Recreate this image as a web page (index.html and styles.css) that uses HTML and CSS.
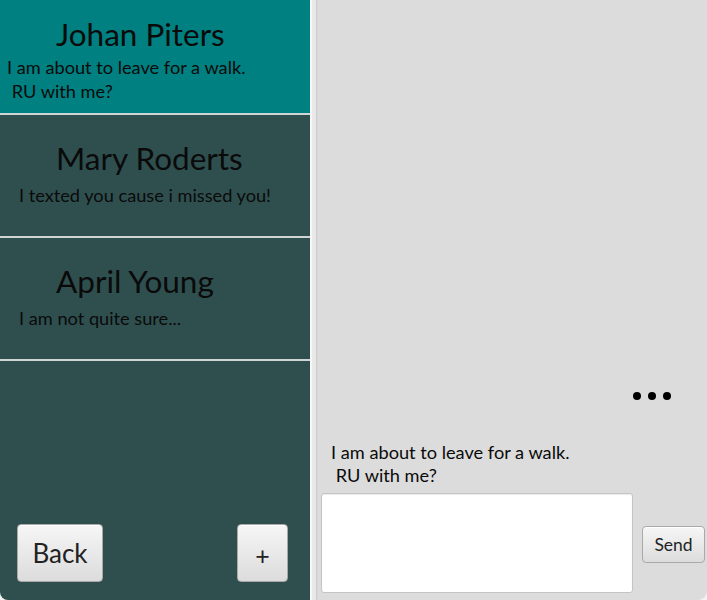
FILE: index.html
```html
<!DOCTYPE html>
<html>
<head>
<meta charset="utf-8">
<link rel="stylesheet" href="styles.css">
</head>
<body>
<div class="app">
  <aside class="sidebar">
    <div class="contact contact-first">
      <div class="name">Johan Piters</div>
      <div class="msg msg-first">I am about to leave for a walk.
 RU with me?</div>
    </div>
    <div class="contact">
      <div class="name">Mary Roderts</div>
      <div class="msg">I texted you cause i missed you!</div>
    </div>
    <div class="contact">
      <div class="name">April Young</div>
      <div class="msg">I am not quite sure...</div>
    </div>
    <div class="spacer"></div>
    <div class="actions">
      <button class="btn btn-back">Back</button>
      <button class="btn btn-add">+</button>
    </div>
  </aside>
  <div class="divider"></div>
  <main class="chat">
    <div class="typing"><span class="dot"></span><span class="dot"></span><span class="dot"></span></div>
    <div class="last-msg">I am about to leave for a walk.
 RU with me?</div>
    <div class="composer">
      <textarea class="input"></textarea>
      <button class="btn btn-send">Send</button>
    </div>
  </main>
</div>
</body>
</html>
```
FILE: styles.css
```css
html, body {
  margin: 0;
  padding: 0;
}
body {
  width: 707px;
  height: 600px;
  overflow: hidden;
  background: #f2f2f2;
  font-family: Lato, "Open Sans", sans-serif;
  color: #111;
}
.app {
  display: flex;
  width: 707px;
  height: 600px;
}
.sidebar {
  width: 310px;
  flex: none;
  display: flex;
  flex-direction: column;
  background: #2f4f4f;
  border-bottom-left-radius: 8px;
}
.contact {
  height: 121px;
  box-sizing: content-box;
  border-bottom: 2px solid #cfd4d4;
  display: flex;
  flex-direction: column;
}
.contact-first {
  height: 113px;
  background: #008080;
}
.name {
  font-size: 31.5px;
  line-height: 36px;
  padding-left: 56px;
  margin-top: 25px;
  color: #0a0a0a;
}
.contact-first .name {
  margin-top: 16px;
}
.msg {
  font-size: 18.2px;
  line-height: 24px;
  padding-left: 19px;
  margin-top: 7px;
  white-space: pre;
  color: #0a0a0a;
}
.msg-first {
  padding-left: 7px;
  margin-top: 3px;
}
.spacer {
  flex: 1;
}
.actions {
  display: flex;
  justify-content: space-between;
  padding: 0 22px 18px 17px;
}
.btn {
  font-family: Lato, "Open Sans", sans-serif;
  color: #222;
  border: 1px solid #a9a9a9;
  border-radius: 4px;
  background: linear-gradient(#f6f6f6, #dcdcdc);
  box-shadow: inset 0 1px 0 #ffffff;
  padding: 0;
  margin: 0;
  box-sizing: border-box;
}
.btn-back {
  width: 86px;
  height: 58px;
  font-size: 26px;
}
.btn-add {
  width: 51px;
  height: 58px;
  font-size: 25px;
  padding-top: 3px;
}
.divider {
  width: 8px;
  flex: none;
  background: linear-gradient(to right, #f7f7f7 0, #f7f7f7 2px, #e8e8e8 2px, #e8e8e8 6px, #cccccc 6px, #cccccc 7px, #d9d9d9 7px);
}
.chat {
  flex: 1;
  display: flex;
  flex-direction: column;
  justify-content: flex-end;
  background: #dcdcdc;
  border-bottom-right-radius: 9px;
  padding: 0 2px 7px 3px;
}
.typing {
  display: flex;
  justify-content: flex-end;
  gap: 7px;
  padding-right: 34px;
  margin-bottom: 41px;
}
.dot {
  width: 8px;
  height: 8px;
  border-radius: 50%;
  background: #000;
}
.last-msg {
  font-size: 18.2px;
  line-height: 23px;
  padding-left: 10px;
  white-space: pre;
  color: #0a0a0a;
  margin-bottom: 6px;
}
.composer {
  display: flex;
  align-items: center;
  gap: 9px;
}
.input {
  width: 312px;
  height: 100px;
  box-sizing: border-box;
  border: 1px solid #c4c4c4;
  border-radius: 3px;
  background: #fff;
  box-shadow: inset 0 1px 1px rgba(0,0,0,0.08);
  resize: none;
  margin: 0;
  outline: none;
}
.btn-send {
  width: 63px;
  height: 37px;
  font-size: 17.5px;
  margin-top: 2px;
}
```
